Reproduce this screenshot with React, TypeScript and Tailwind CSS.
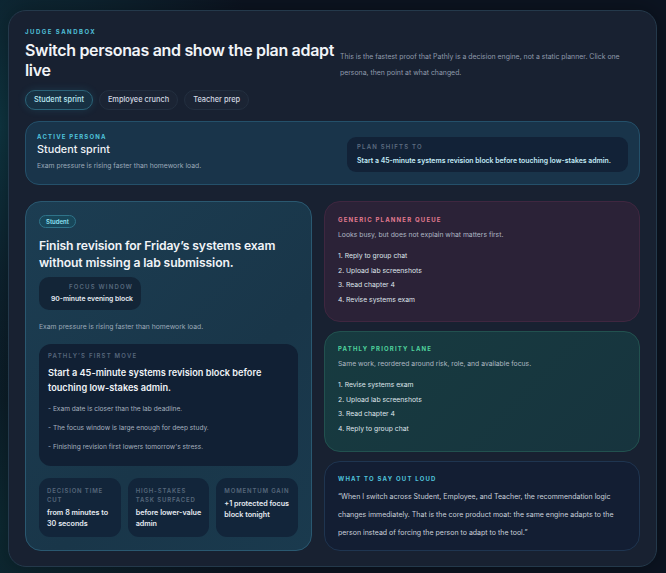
import React from 'react';

const personas = ['Student sprint', 'Employee crunch', 'Teacher prep'];

const genericQueue = ['Reply to group chat', 'Upload lab screenshots', 'Read chapter 4', 'Revise systems exam'];
const priorityLane = ['Revise systems exam', 'Upload lab screenshots', 'Read chapter 4', 'Reply to group chat'];

const reasons = [
  'Exam date is closer than the lab deadline.',
  'The focus window is large enough for deep study.',
  "Finishing revision first lowers tomorrow's stress.",
];

const metrics = [
  { label: 'Decision time cut', value: 'from 8 minutes to 30 seconds' },
  { label: 'High-stakes task surfaced', value: 'before lower-value admin' },
  { label: 'Momentum gain', value: '+1 protected focus block tonight' },
];

function Eyebrow({ children, className = '' }: { children: React.ReactNode; className?: string }) {
  return (
    <div className={`text-[6px] font-bold uppercase tracking-[0.2em] leading-[8px] ${className}`}>{children}</div>
  );
}

export default function App() {
  return (
    <div
      className="min-h-[573px] w-full bg-[#0c1421] bg-[radial-gradient(circle_at_0%_22%,#0f3642_0%,transparent_34%),radial-gradient(circle_at_0%_92%,#0d2a33_0%,transparent_30%)] px-2 pt-[10px] pb-[6px] text-[#e6ebf2]"
      style={{ fontFamily: 'Inter, "Noto Sans", sans-serif' }}
    >
      <div className="w-[649px] rounded-[18px] border border-[#24394b] bg-[#182131] px-[16px] pt-[17px] pb-[15px] shadow-[0_0_24px_rgba(0,0,0,0.35)]">
        {/* header */}
        <Eyebrow className="text-[6.5px] text-[#4fbfd6] tracking-[0.25em]">Judge sandbox</Eyebrow>
        <div className="flex items-start">
          <h1 className="w-[315px] shrink-0 pt-[4px] text-[16px] font-semibold leading-[20px] tracking-[-0.02em] text-[#f1f4f8]">
            Switch personas and show the plan adapt live
          </h1>
          <p className="ml-0 pt-[13px] text-[6.9px] leading-[16px] text-[#8f9aab]">
            This is the fastest proof that Pathly is a decision engine, not a static planner. Click one persona, then point at what changed.
          </p>
        </div>

        <div className="mt-[9px] flex gap-[6px]">
          {personas.map((p, i) => (
            <button
              key={p}
              className={
                i === 0
                  ? 'h-[20px] rounded-full border border-[#2b6378] bg-[#173143] px-[8px] text-[7.4px] font-medium text-[#bdebf5] shadow-[0_0_8px_rgba(56,189,220,0.15)]'
                  : 'h-[20px] rounded-full border border-[#232f40] bg-[#1b2434] px-[8px] text-[7.4px] font-medium text-[#d3d9e2]'
              }
            >
              {p}
            </button>
          ))}
        </div>

        {/* active persona */}
        <div className="mt-[11px] flex items-start justify-between rounded-[14px] border border-[#24506a] bg-[#19344a] pl-[11px] pr-[11px] pt-[11px] pb-[12px]">
          <div>
            <Eyebrow className="text-[#4fc3da]">Active persona</Eyebrow>
            <div className="mt-[2px] text-[10.8px] font-medium leading-[14px] text-[#eef2f6]">Student sprint</div>
            <div className="mt-[4px] text-[6.8px] leading-[10px] text-[#9ba8b8]">Exam pressure is rising faster than homework load.</div>
          </div>
          <div className="mt-[4px] w-[281px] rounded-[9px] bg-[#122237] px-[10px] pt-[6px] pb-[7px]">
            <Eyebrow className="font-semibold text-[#5d6c80]">Plan shifts to</Eyebrow>
            <div className="mt-[5px] text-[6.9px] font-semibold leading-[9px] text-[#c4ecf7]">
              Start a 45-minute systems revision block before touching low-stakes admin.
            </div>
          </div>
        </div>

        {/* columns */}
        <div className="mt-[16px] grid grid-cols-[287px_1fr] gap-[12px]">
          {/* plan card */}
          <div className="rounded-[16px] border border-[#2a5870] bg-[#1a384d] bg-[linear-gradient(135deg,#1c3d52_0%,#193649_60%,#1a3a4e_100%)] px-[13px] pt-[13px] pb-[12px]">
            <div className="w-fit rounded-full border border-[#2f7389] bg-[#18475a] px-[6px] text-[6px] font-semibold leading-[11px] text-[#8fe2f2]">
              Student
            </div>
            <h2 className="mt-[9px] text-[12.2px] font-semibold leading-[17px] tracking-[-0.01em] text-[#f1f4f8]">
              Finish revision for Friday&rsquo;s systems exam without missing a lab submission.
            </h2>
            <div className="mt-[6px] w-[102px] rounded-[10px] bg-[#132537] px-[8px] pt-[6px] pb-[6px] text-right">
              <Eyebrow className="font-semibold text-[#586a7e]">Focus window</Eyebrow>
              <div className="mt-[3px] text-[6.8px] font-semibold leading-[10px] text-[#e6ebf2]">90-minute evening block</div>
            </div>
            <p className="mt-[12px] text-[6.8px] leading-[10px] text-[#9ba8b8]">Exam pressure is rising faster than homework load.</p>

            <div className="mt-[12px] rounded-[12px] bg-[#112034] px-[9px] pt-[8px] pb-[9px]">
              <Eyebrow className="font-semibold text-[#56667b]">Pathly&rsquo;s first move</Eyebrow>
              <div className="mt-[5px] text-[9.2px] font-semibold leading-[15px] text-[#eef2f6]">
                Start a 45-minute systems revision block before touching low-stakes admin.
              </div>
              <ul className="mt-[5px] flex flex-col">
                {reasons.map((r) => (
                  <li key={r} className="text-[6.6px] leading-[19px] text-[#a6b1bf]">
                    - {r}
                  </li>
                ))}
              </ul>
            </div>

            <div className="mt-[12px] grid grid-cols-3 gap-[7px]">
              {metrics.map((m) => (
                <div key={m.label} className="h-[59px] rounded-[11px] bg-[#12253a] px-[8px] pt-[8px]">
                  <Eyebrow className="text-[5.5px] font-semibold leading-[9px] tracking-[0.14em] text-[#56677b]">{m.label}</Eyebrow>
                  <div className="mt-[3px] text-[7.2px] font-semibold leading-[11px] text-[#e6ebf2]">{m.value}</div>
                </div>
              ))}
            </div>
          </div>

          {/* comparison column */}
          <div className="flex flex-col gap-[9px]">
            <div className="rounded-[16px] border border-[#3f2740] bg-[#2b2237] px-[13px] pt-[14px] pb-[14px]">
              <Eyebrow className="text-[#e27a90]">Generic planner queue</Eyebrow>
              <p className="mt-[6px] text-[6.8px] leading-[10px] text-[#aeb6c3]">Looks busy, but does not explain what matters first.</p>
              <ol className="mt-[9px] flex flex-col">
                {genericQueue.map((t, i) => (
                  <li key={t} className="text-[6.8px] leading-[14.5px] text-[#dfe4ea]">
                    {i + 1}. {t}
                  </li>
                ))}
              </ol>
            </div>

            <div className="rounded-[16px] border border-[#22514f] bg-[#17373f] bg-[linear-gradient(135deg,#173b40_0%,#17343e_100%)] px-[13px] pt-[13px] pb-[15px]">
              <Eyebrow className="text-[#4fd49d]">Pathly priority lane</Eyebrow>
              <p className="mt-[6px] text-[6.8px] leading-[10px] text-[#aeb8c2]">Same work, reordered around risk, role, and available focus.</p>
              <ol className="mt-[9px] flex flex-col">
                {priorityLane.map((t, i) => (
                  <li key={t} className="text-[6.8px] leading-[14.5px] text-[#dfe4ea]">
                    {i + 1}. {t}
                  </li>
                ))}
              </ol>
            </div>

            <div className="flex-1 rounded-[16px] border border-[#1f3550] bg-[#131e33] px-[13px] pt-[13px] pb-[8px]">
              <Eyebrow className="text-[#4fc3da]">What to say out loud</Eyebrow>
              <p className="mt-[5px] text-[7px] leading-[18px] text-[#c9d0da]">
                &ldquo;When I switch across Student, Employee, and Teacher, the recommendation logic changes immediately. That is the core product moat: the same engine adapts to the person instead of forcing the person to adapt to the tool.&rdquo;
              </p>
            </div>
          </div>
        </div>
      </div>
    </div>
  );
}
